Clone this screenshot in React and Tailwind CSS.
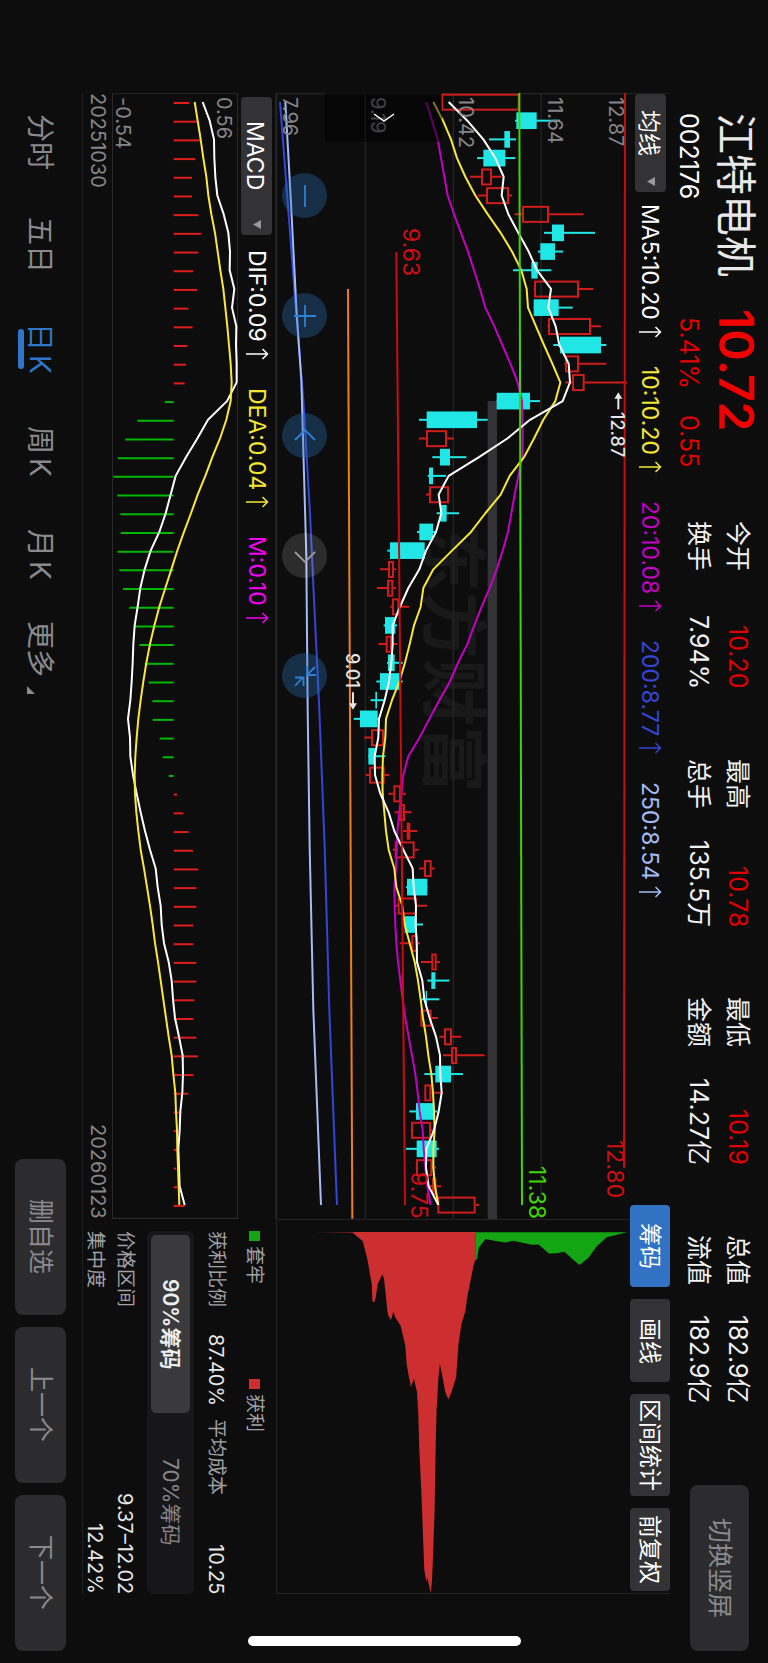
import React from "react";

/* Chart drawing units: three to a pixel. Price runs along x, time runs along y. */
const STEP = 56.08;
const FIRST = 66;
const at = (i) => FIRST + i * STEP;

// [rising, low, bodyLow, bodyHigh, high]
const CANDLES = [
  [1, 512, 514, 748, 748], [0, 735, 739, 800, 870], [0, 657, 703, 720, 738], [0, 621, 640, 706, 736],
  [1, 600, 634, 665, 694], [1, 624, 649, 716, 726], [1, 734, 757, 836, 941], [0, 822, 846, 882, 975],
  [0, 804, 811, 855, 879], [0, 729, 784, 803, 844], [1, 791, 793, 926, 969], [0, 791, 791, 866, 908],
  [1, 832, 835, 962, 993], [0, 850, 870, 993, 1009], [1, 883, 886, 926, 1009], [1, 886, 907, 943, 1071],
  [0, 680, 680, 780, 810], [0, 447, 470, 621, 653], [1, 447, 469, 530, 552], [0, 487, 510, 540, 589],
  [0, 473, 477, 489, 528], [1, 468, 478, 536, 536], [0, 500, 510, 530, 567], [0, 441, 448, 489, 495],
  [0, 352, 360, 464, 464], [1, 330, 355, 371, 378], [1, 321, 352, 369, 378], [1, 361, 367, 387, 417],
  [0, 341, 345, 376, 381], [1, 325, 348, 365, 381], [0, 351, 354, 374, 398], [0, 319, 330, 390, 398],
  [0, 302, 316, 321, 342], [0, 251, 270, 323, 330], [1, 283, 304, 341, 345], [0, 295, 295, 315, 346],
  [1, 288, 298, 343, 357], [1, 355, 371, 392, 408], [1, 374, 388, 404, 425], [1, 399, 411, 420, 441],
  [1, 369, 375, 433, 446], [1, 447, 463, 484, 494], [0, 408, 411, 472, 472], [1, 372, 384, 440, 471],
  [0, 404, 404, 440, 459], [1, 389, 425, 443, 450], [1, 453, 485, 499, 510], [0, 472, 484, 496, 538],
  [0, 455, 467, 471, 508], [1, 450, 452, 484, 504], [1, 508, 523, 545, 574], [1, 519, 544, 560, 644],
  [0, 463, 496, 543, 579], [1, 462, 464, 483, 520], [0, 418, 438, 493, 502], [1, 422, 424, 482, 490],
  [0, 408, 440, 500, 507], [1, 437, 439, 486, 498], [1, 474, 487, 498, 513], [1, 503, 503, 616, 627],
];

const MA5 = [536, 592, 640, 676, 701, 695, 715, 745, 776, 801, 843, 835, 857, 868, 896, 900, 878, 780, 712, 627, 536, 506, 514, 498, 468, 448, 415, 390, 368, 368, 364, 357, 344, 327, 325, 314, 315, 331, 356, 373, 400, 428, 431, 438, 437, 440, 441, 457, 463, 479, 498, 510, 511, 515, 506, 492, 469, 468, 476, 505];
const MA10 = [490, 519, 543, 561, 586, 616, 653, 692, 726, 754, 770, 774, 798, 822, 847, 871, 856, 820, 792, 762, 719, 692, 646, 603, 546, 490, 460, 452, 432, 419, 405, 388, 366, 348, 346, 339, 337, 338, 343, 348, 356, 373, 379, 397, 404, 419, 434, 444, 452, 459, 468, 475, 484, 489, 492, 494, 490, 490, 495, 505];
const MA20 = [469, 486, 503, 513, 523, 533, 552, 573, 594, 612, 630, 646, 673, 697, 721, 743, 756, 757, 758, 757, 745, 734, 724, 714, 698, 680, 659, 635, 613, 592, 564, 540, 508, 478, 449, 415, 400, 394, 388, 382, 380, 378, 373, 374, 376, 379, 384, 391, 398, 406, 416, 426, 436, 443, 449, 458, 461, 466, 472, 482];

const MACD_BARS = [567, 593, 601, 585, 575, 575, 594, 603, 594, 578, 590, 564, 577, 561, 557, 553, 493, 411, 375, 353, 339, 351, 360, 361, 352, 357, 368, 387, 401, 417, 433, 445, 456, 457, 478, 487, 505, 530, 549, 565, 578, 594, 588, 588, 579, 579, 588, 588, 582, 579, 588, 593, 579, 564, 543, 537, 533, 528, 531, 553];
const DIF = [607, 628, 641, 642, 645, 651, 670, 684, 689, 688, 702, 695, 708, 707, 709, 709, 680, 623, 591, 557, 526, 511, 496, 477, 451, 433, 420, 412, 403, 399, 397, 394, 390, 383, 389, 390, 398, 409, 421, 434, 449, 466, 472, 481, 484, 491, 505, 514, 518, 524, 536, 547, 548, 546, 540, 538, 534, 536, 538, 553];
const DEA = [583, 592, 601, 609, 618, 624, 633, 644, 652, 660, 669, 675, 681, 686, 691, 694, 691, 678, 659, 636, 615, 592, 572, 551, 531, 513, 495, 477, 462, 449, 438, 429, 421, 414, 409, 405, 403, 404, 408, 414, 421, 431, 440, 449, 457, 464, 473, 481, 489, 497, 505, 514, 519, 525, 527, 530, 531, 533, 535, 537];

const toPoints = (series) => series.map((v, i) => `${v},${at(i)}`).join(" ");

const STATS = [
  [["今开", "10.20", true], ["换手", "7.94%", false]],
  [["最高", "10.78", true], ["总手", "135.5万", false]],
  [["最低", "10.19", true], ["金额", "14.27亿", false]],
  [["总值", "182.9亿", false], ["流值", "182.9亿", false]],
];

const AVERAGES = [
  ["MA5:10.20", "text-white"],
  ["10:10.20", "text-[#f5e633]"],
  ["20:10.08", "text-[#c400c4]"],
  ["200:8.77", "text-[#3346d6]"],
  ["250:8.54", "text-[#a3bcf5]"],
];

const MACD_VALUES = [
  ["DIF:0.09", "text-white"],
  ["DEA:0.04", "text-[#f5e633]"],
  ["M:0.10", "text-[#f500f5]"],
];

function RiseArrow() {
  return (
    <svg viewBox="0 0 24 12" className="h-3 w-6 shrink-0" fill="none" stroke="currentColor" strokeWidth="1.5" aria-hidden="true">
      <path d="M1 6H22.5M17.5 1L22.5 6L17.5 11" />
    </svg>
  );
}

function Readings({ items }) {
  return (
    <ul className="flex items-center gap-7">
      {items.map(([text, tone]) => (
        <li key={text} className={`flex items-center gap-[6px] text-[23px] leading-[32px] whitespace-nowrap ${tone}`}>
          <span>{text}</span>
          <RiseArrow />
        </li>
      ))}
    </ul>
  );
}

function Picker({ label, options, className }) {
  return (
    <div className={`relative w-[31px] shrink-0 rounded-[4px] bg-[#333335] text-[23px] ${className}`}>
      <select
        aria-label={label}
        className="h-full w-full appearance-none bg-transparent pb-5 text-white outline-none [text-orientation:sideways] [writing-mode:vertical-rl]"
      >
        {options.map((o) => (
          <option key={o}>{o}</option>
        ))}
      </select>
      <svg viewBox="0 0 8 9" className="pointer-events-none absolute bottom-[6px] left-3 h-[9px] w-2" aria-hidden="true">
        <path d="M0 4.5L8 0V9Z" fill="#9a9a9e" />
      </svg>
    </div>
  );
}

function Header() {
  return (
    <header className="flex w-[98px] shrink-0 items-center pt-[113px] pb-3">
      <div className="h-[408px] shrink-0 self-end">
        <div className="flex items-center leading-[56px]">
          <h1 className="h-[196px] text-[41px] font-normal text-[#e8e8e8]">江特电机</h1>
          <strong className="text-[48px] font-semibold text-[#f00000]">10.72</strong>
        </div>
        <div className="flex text-[25px] leading-[38px]">
          <span className="h-[204px] text-white">002176</span>
          <span className="h-[98px] text-[#e00000]">5.41%</span>
          <span className="text-[#e00000]">0.55</span>
        </div>
      </div>
      <dl className="mr-[3px] flex gap-[70px] text-[25px] text-[#f2f2f2]">
        {STATS.map((rows) => (
          <div key={rows[0][0]} className="h-[168px] leading-[39px]">
            {rows.map(([name, value, up]) => (
              <div key={name} className="flex justify-between whitespace-nowrap">
                <dt>{name}</dt>
                <dd className={up ? "text-[#e00000]" : ""}>{value}</dd>
              </div>
            ))}
          </div>
        ))}
      </dl>
      <button className="mt-auto h-[166px] w-[59px] rounded-lg bg-[#2c2c2e] text-[25px] text-[#8a8a8e]">切换竖屏</button>
    </header>
  );
}

function Toolbar() {
  const tool = "w-full rounded-[4px] text-[23px] text-white";
  return (
    <div className="mt-[93px] mb-[69px] flex w-10 shrink-0 items-center border-x border-[#202022] pb-[2px]">
      <Picker label="指标" options={["均线", "BOLL"]} className="h-[98px] [&>select]:pt-4" />
      <div className="mt-3">
        <Readings items={AVERAGES} />
      </div>
      <div className="mt-auto flex gap-3 self-stretch">
        <button className={`${tool} h-[82px] bg-[#3173c2]`}>筹码</button>
        <button className={`${tool} h-[83px] bg-[#333335]`}>画线</button>
        <button className={`${tool} h-[102px] bg-[#333335]`}>区间统计</button>
        <button className={`${tool} h-[83px] bg-[#333335]`}>前复权</button>
      </div>
    </div>
  );
}

function PriceDrawing() {
  return (
    <svg viewBox="18 39 1062 3378" preserveAspectRatio="none" className="absolute inset-0 h-full w-full" fill="none" role="img" aria-label="日K线">
      <g stroke="#242426" strokeWidth="4">
        <path d="M20 39V3417M286 39V3417M550 39V3417M813 39V3417M18 41H1080" />
      </g>
      <rect x="653" y="963" width="28" height="2454" fill="#333335" />
      {CANDLES.map(([up, low, a, b, high], i) => {
        const y = at(i);
        return up ? (
          <g key={i} stroke="#d01c1c" strokeWidth="6">
            <path d={`M${low} ${y}H${a}M${b} ${y}H${high}`} />
            <rect x={a + 2} y={y - 22} width={Math.max(b - a - 4, 2)} height="45" />
          </g>
        ) : (
          <g key={i} fill="#20e6e6">
            <rect x={low} y={y - 3} width={high - low} height="6" />
            <rect x={a} y={y - 25} width={b - a} height="50" />
          </g>
        );
      })}
      <g strokeWidth="6" strokeLinejoin="round">
        <polyline points="30,66 48,300 74,640 100,960 120,1300 134,1600 148,1890 164,2300 178,2790 201,3375" stroke="#3346d6" />
        <polyline points="46,66 62,350 80,700 94,900 104,1250 109,1430 113,1890 119,2300 130,2790 153,3375" stroke="#a3bcf5" />
        <polyline points={toPoints(MA20)} stroke="#c400c4" />
        <polyline points={toPoints(MA10)} stroke="#f8e83c" />
        <polyline points={toPoints(MA5)} stroke="#ffffff" />
      </g>
      <g strokeWidth="6">
        <path d="M1065 39L1062 3263" stroke="#c80d12" />
        <path d="M748 39L756 3375" stroke="#42d400" />
        <path d="M379 516L405 3375" stroke="#c80d12" />
        <path d="M234 627L247 3416" stroke="#ee8010" />
      </g>
      <g stroke="#e6e6e6" strokeWidth="6">
        <path d="M1045 950V988" />
        <path d="M249 1837V1876" />
      </g>
      <path d="M1033 956L1045 937L1057 956ZM237 1870L249 1889L261 1870Z" fill="#e6e6e6" />
    </svg>
  );
}

const BLUE_BUTTON = "bg-[#2f74c0]/33 text-[#2f7fd6]";
const ZOOM_BUTTONS = [
  ["缩小", BLUE_BUTTON, "M12 1V23"],
  ["放大", BLUE_BUTTON, "M12 1V23M1 12H23"],
  ["左移", BLUE_BUTTON, "M2 16L12 6L22 16"],
  ["右移", "bg-white/13 text-[#9a9a9e]", "M2 8L12 18L22 8"],
  ["收起", BLUE_BUTTON, "M22 3L14 11M14 2V11H23M2 22L10 13M2 13.5H10.5V22"],
];

function PriceChart() {
  const axis = "absolute top-1 text-[20px] leading-none text-[#86868a]";
  const level = "absolute text-[23px] leading-none";
  const mark = "absolute text-[18px] leading-none font-medium text-[#e6e6e6]";
  return (
    <section className="relative w-[354px] shrink-0">
      <div className="absolute top-[432px] left-[144px] text-[67px] leading-none font-bold text-[#191919]">东方财富</div>
      <PriceDrawing />
      <span className={`${axis} left-[330px]`}>12.87</span>
      <span className={`${axis} left-[269px]`}>11.64</span>
      <span className={`${axis} left-[180px]`}>10.42</span>
      <span className={`${axis} left-[92px]`}>9.19</span>
      <span className={`${axis} left-1`}>7.96</span>
      <span className={`${level} bottom-[21px] left-[327px] text-[#d00d12]`}>12.80</span>
      <span className={`${level} bottom-0 left-[249px] text-[#42d400]`}>11.38</span>
      <span className={`${level} bottom-0 left-[131px] text-[#d00d12]`}>9.75</span>
      <span className={`${level} top-[135px] left-[123px] text-[#d00d12]`}>9.63</span>
      <span className={`${mark} top-[319px] left-[332px]`}>12.87</span>
      <span className={`${mark} top-[560px] left-[67px]`}>9.01</span>
      <button aria-label="展开" className="absolute top-0 left-[49px] flex h-[49px] w-[117px] items-center justify-center bg-black/50 text-white">
        <svg viewBox="0 0 22 9" className="h-[9px] w-[22px]" fill="none" stroke="currentColor" strokeWidth="1.5">
          <path d="M1 1L11 8L21 1" />
        </svg>
      </button>
      <div className="absolute top-20 left-[6px] flex gap-[75px]">
        {ZOOM_BUTTONS.map(([name, tone, d]) => (
          <button key={name} aria-label={name} className={`flex size-[45px] items-center justify-center rounded-full ${tone}`}>
            <svg viewBox="0 0 24 24" className="size-6" fill="none" stroke="currentColor" strokeWidth="1.8">
              <path d={d} />
            </svg>
          </button>
        ))}
      </div>
    </section>
  );
}

function MacdChart() {
  const axis = "absolute top-1 text-[20px] leading-none text-[#86868a]";
  return (
    <section className="relative w-[126px] shrink-0">
      <svg viewBox="335 39 378 3378" preserveAspectRatio="none" className="absolute inset-0 h-full w-full" fill="none" role="img" aria-label="MACD">
        <path d="M335 39H712V3415H336V39" stroke="#2a2a2c" strokeWidth="4" />
        <g strokeWidth="6">
          {MACD_BARS.map((v, i) => (
            <path key={i} d={`M520 ${at(i) + 3}H${v}`} stroke={v > 520 ? "#e01c1c" : "#00b800"} />
          ))}
        </g>
        <g strokeWidth="6" strokeLinejoin="round">
          <polyline points={toPoints(DIF)} stroke="#ffffff" />
          <polyline points={toPoints(DEA)} stroke="#f8e83c" />
        </g>
      </svg>
      <span className={`${axis} left-[102px]`}>0.56</span>
      <span className={`${axis} left-px`}>-0.54</span>
    </section>
  );
}

function ChipPanel() {
  const label = "text-[19px] text-[#a2a2a6]";
  const value = "text-[20px] text-[#e8e8e8]";
  return (
    <aside className="flex h-[375px] shrink-0 flex-col">
      <svg viewBox="18 716 1062 1126" preserveAspectRatio="none" className="h-full w-[354px] shrink-0 border border-r-0 border-[#242426]" role="img" aria-label="筹码分布">
        <path
          fill="#14a514"
          d="M615 753H1072L1010 768L980 795L955 830L928 852L905 832L883 812L860 816L836 817L805 790L785 791L728 779L705 784L680 780L645 773L625 800L620 832L615 840Z"
        />
        <path
          fill="#cd2e30"
          d="M130 753L245 752H616V830L610 850L600 900L590 950L585 990L573 1030L564 1090L557 1190L545 1230L534 1258L524 1235L517 1195L508 1150L504 1190L498 1290L495 1420L492 1600L487 1740L484 1810L480 1842L476 1822L470 1795L467 1808L461 1770L457 1660L452 1530L446 1405L443 1300L439 1235L430 1195L421 1220L414 1185L408 1150L404 1095L390 1035L374 1010L368 993L361 1018L353 1005L350 990L345 940L340 895L335 880L330 890L321 910L315 950L310 966L305 960L303 910L290 835L276 780L245 754Z"
        />
      </svg>
      <div className="flex flex-1 flex-col pt-3 pr-[2px]">
        <div className={`flex leading-[40px] ${label}`}>
          <span className="flex h-[148px] items-center gap-[5px]">
            <i className="h-[10px] w-[11px] bg-[#14a514]" />套牢
          </span>
          <span className="flex items-center gap-[5px]">
            <i className="h-[10px] w-[11px] bg-[#cd2e30]" />获利
          </span>
        </div>
        <div className="flex gap-3 leading-[36px]">
          <p className="flex flex-1 items-center justify-between">
            <span className={label}>获利比例</span>
            <span className={value}>87.40%</span>
          </p>
          <p className="flex flex-1 items-center justify-between">
            <span className={label}>平均成本</span>
            <span className={value}>10.25</span>
          </p>
        </div>
        <div className="mr-1 flex w-[47px] shrink-0 rounded-[6px] bg-[#171719] p-1 text-[21px]">
          <button aria-pressed="true" className="h-1/2 rounded-[5px] bg-[#3a3a3c] font-semibold text-[#eeeeee]">90%筹码</button>
          <button aria-pressed="false" className="h-1/2 text-[#86868a]">70%筹码</button>
        </div>
        <p className="mr-1 flex items-center justify-between leading-[36px]">
          <span className={label}>价格区间</span>
          <span className={value}>9.37–12.02</span>
        </p>
        <p className="flex items-center justify-between leading-[24px]">
          <span className={label}>集中度</span>
          <span className={value}>12.42%</span>
        </p>
      </div>
    </aside>
  );
}

function Footer() {
  const tab = "relative flex h-[103px] items-center justify-center text-[28px]";
  const action = "h-[156px] w-[51px] rounded-lg bg-[#2c2c2e] text-[25px] text-[#8a8a8e]";
  const periods = [["分时", ""], ["五日", ""], ["日", "K"], ["周", "K"], ["月", "K"]];
  return (
    <footer className="flex w-[83px] shrink-0 items-center pt-[91px] pb-3">
      <nav className="mr-px flex">
        {periods.map(([a, b]) => {
          const active = a === "日";
          return (
            <button key={a} className={`${tab} ${active ? "text-[#2f76c8]" : "text-[#8a8a8e]"}`}>
              {a}
              {b && <span className="mt-1">{b}</span>}
              {active && <i className="absolute left-0 h-10 w-[6px] -translate-x-px rounded-full bg-[#2f76c8]" />}
            </button>
          );
        })}
        <button className={`${tab} gap-2 text-[#8a8a8e]`}>
          更多
          <svg viewBox="0 0 8 8" className="ml-2 size-2 self-end" fill="currentColor" aria-hidden="true">
            <path d="M0 0L8 8H0Z" />
          </svg>
        </button>
      </nav>
      <div className="mt-auto flex gap-3">
        <button className={action}>删自选</button>
        <button className={action}>上一个</button>
        <button className={action}>下一个</button>
      </div>
    </footer>
  );
}

export default function App() {
  return (
    <div className="relative flex h-screen w-full flex-col overflow-hidden bg-[#0d0d0d] font-[Inter,'Noto_Sans_CJK_SC',sans-serif] [text-orientation:sideways] [writing-mode:vertical-rl]">
      <Header />
      <Toolbar />
      <main className="mt-[93px] mb-[69px] flex flex-1 border-l border-[#202022]">
        <div className="flex min-h-0 flex-1 flex-col">
          <PriceChart />
          <div className="flex w-[38px] shrink-0 items-center border-r border-[#202022]">
            <Picker label="副图指标" options={["MACD", "KDJ"]} className="mt-1 h-[138px] [&>select]:pt-6" />
            <div className="mt-[15px]">
              <Readings items={MACD_VALUES} />
            </div>
          </div>
          <MacdChart />
          <div className="flex items-center justify-between text-[20px] leading-[28px] text-[#86868a]">
            <time dateTime="2025-10-30">20251030</time>
            <time dateTime="2026-01-23">20260123</time>
          </div>
        </div>
        <ChipPanel />
      </main>
      <Footer />
      <div className="absolute bottom-[17px] left-[248px] h-[10px] w-[273px] rounded-full bg-white" />
    </div>
  );
}
